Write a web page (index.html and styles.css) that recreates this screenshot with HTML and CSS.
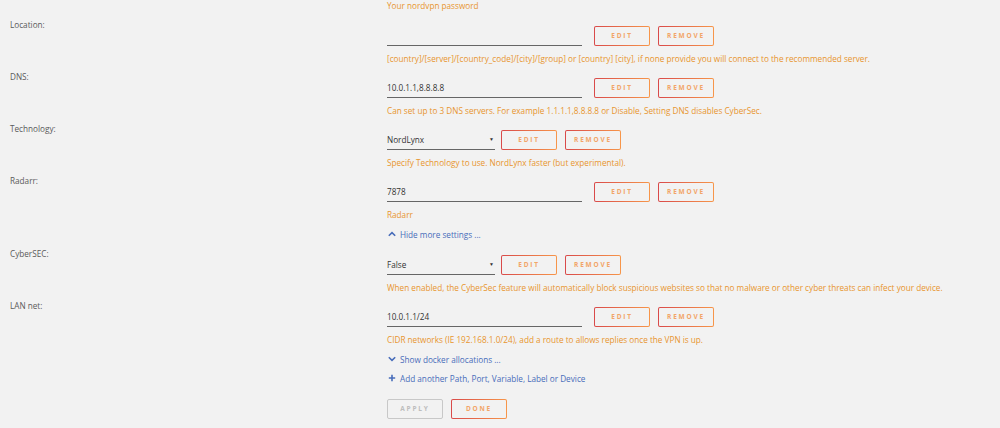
FILE: index.html
```html
<!DOCTYPE html>
<html>
<head>
<meta charset="utf-8">
<link rel="stylesheet" href="styles.css">
</head>
<body>
<div class="page">
  <div class="top-help">Your nordvpn password</div>

  <div class="row">
    <div class="label">Location:</div>
    <div class="content">
      <div class="control">
        <div class="input"></div>
        <button class="btn">Edit</button>
        <button class="btn">Remove</button>
      </div>
      <div class="help">[country]/[server]/[country_code]/[city]/[group] or [country] [city], if none provide you will connect to the recommended server.</div>
    </div>
  </div>

  <div class="row">
    <div class="label">DNS:</div>
    <div class="content">
      <div class="control">
        <div class="input">10.0.1.1,8.8.8.8</div>
        <button class="btn">Edit</button>
        <button class="btn">Remove</button>
      </div>
      <div class="help">Can set up to 3 DNS servers. For example 1.1.1.1,8.8.8.8 or Disable, Setting DNS disables CyberSec.</div>
    </div>
  </div>

  <div class="row">
    <div class="label">Technology:</div>
    <div class="content">
      <div class="control">
        <div class="select"><span>NordLynx</span><span class="arrow">&#9660;</span></div>
        <button class="btn">Edit</button>
        <button class="btn">Remove</button>
      </div>
      <div class="help">Specify Technology to use. NordLynx faster (but experimental).</div>
    </div>
  </div>

  <div class="row">
    <div class="label">Radarr:</div>
    <div class="content">
      <div class="control">
        <div class="input">7878</div>
        <button class="btn">Edit</button>
        <button class="btn">Remove</button>
      </div>
      <div class="help">Radarr</div>
    </div>
  </div>

  <div class="link hide-link">
    <svg class="ico" viewBox="0 0 10 10" width="8" height="8"><path d="M1 7.2 L5 3.2 L9 7.2" fill="none" stroke="#486dba" stroke-width="2"/></svg>
    <span>Hide more settings ...</span>
  </div>

  <div class="row">
    <div class="label">CyberSEC:</div>
    <div class="content">
      <div class="control">
        <div class="select"><span>False</span><span class="arrow">&#9660;</span></div>
        <button class="btn">Edit</button>
        <button class="btn">Remove</button>
      </div>
      <div class="help">When enabled, the CyberSec feature will automatically block suspicious websites so that no malware or other cyber threats can infect your device.</div>
    </div>
  </div>

  <div class="row">
    <div class="label">LAN net:</div>
    <div class="content">
      <div class="control">
        <div class="input">10.0.1.1/24</div>
        <button class="btn">Edit</button>
        <button class="btn">Remove</button>
      </div>
      <div class="help">CIDR networks (IE 192.168.1.0/24), add a route to allows replies once the VPN is up.</div>
    </div>
  </div>

  <div class="link show-link">
    <svg class="ico" viewBox="0 0 10 10" width="8" height="8"><path d="M1 2.8 L5 6.8 L9 2.8" fill="none" stroke="#486dba" stroke-width="2"/></svg>
    <span>Show docker allocations ...</span>
  </div>
  <div class="link add-link">
    <svg class="ico" viewBox="0 0 10 10" width="8" height="8"><path d="M5 1 V9 M1 5 H9" fill="none" stroke="#486dba" stroke-width="2"/></svg>
    <span>Add another Path, Port, Variable, Label or Device</span>
  </div>

  <div class="actions">
    <button class="btn btn-disabled">Apply</button>
    <button class="btn">Done</button>
  </div>
</div>
</body>
</html>
```

FILE: styles.css
```css
* { box-sizing: border-box; }
html, body {
  margin: 0;
  padding: 0;
  background: #f2f2f2;
}
body {
  font-family: "Open Sans", "Liberation Sans", sans-serif;
  font-size: 8.2px;
  color: #555;
  height: 428px;
  overflow: hidden;
}
.top-help {
  margin-left: 387px;
  line-height: 12px;
  color: #e8952e;
  margin-bottom: 7px;
}
.row {
  display: flex;
  margin-bottom: 6px;
}
.label {
  width: 387px;
  padding-left: 10px;
  line-height: 12px;
  color: #5a5a5a;
  flex: none;
}
.content {
  padding-top: 7px;
  flex: 1;
}
.control {
  display: flex;
  align-items: center;
  height: 20px;
}
.input {
  width: 195px;
  height: 20px;
  line-height: 19px;
  border-bottom: 1px solid #666;
  color: #333;
  margin-right: 12px;
}
.select {
  width: 108px;
  height: 20px;
  line-height: 19px;
  border-bottom: 1px solid #666;
  color: #333;
  margin-right: 6px;
  display: flex;
  justify-content: space-between;
}
.arrow {
  font-size: 5px;
  color: #333;
  padding-right: 1px;
}
.btn {
  width: 56px;
  height: 20px;
  margin: 0 8px 0 0;
  padding: 0;
  border: 1px solid transparent;
  border-radius: 2px;
  background:
    linear-gradient(#f2f2f2, #f2f2f2) padding-box,
    linear-gradient(90deg, #d94a4a, #f7964a) border-box;
  font-family: "Open Sans", "Liberation Sans", sans-serif;
  font-size: 6.5px;
  font-weight: 700;
  letter-spacing: 1.8px;
  text-transform: uppercase;
  color: #f2a568;
  text-align: center;
  line-height: 18px;
}
.btn-disabled {
  background: #f2f2f2;
  border: 1px solid #c8c8c8;
  color: #bdbdbd;
}
.help {
  margin-top: 7px;
  line-height: 12px;
  color: #e8952e;
  white-space: nowrap;
}
.link {
  margin-left: 388px;
  display: flex;
  align-items: center;
  height: 14px;
  color: #486dba;
}
.ico {
  margin-right: 4px;
  flex: none;
}
.hide-link {
  margin-bottom: 7px;
}
.show-link {
  margin-bottom: 5px;
}
.add-link {
  margin-bottom: 14px;
}
.actions {
  display: flex;
  margin-left: 387px;
}
```
